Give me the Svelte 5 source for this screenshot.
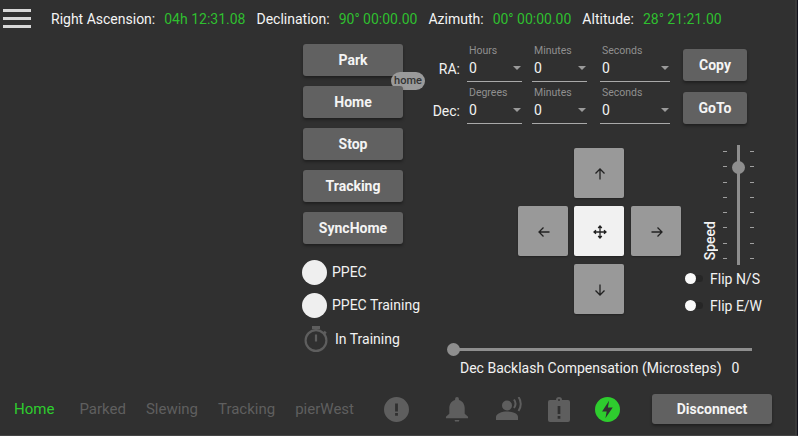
<script>
  const readouts = [
    ['Right Ascension:', '04h 12:31.08'],
    ['Declination:', '90° 00:00.00'],
    ['Azimuth:', '00° 00:00.00'],
    ['Altitude:', '28° 21:21.00']
  ];
  const actions = ['Park', 'Home', 'Stop', 'Tracking', 'SyncHome'];
  const coords = [
    { label: 'RA:', fields: [['Hours', 'w1'], ['Minutes', 'w1'], ['Seconds', 'w2']], action: 'Copy' },
    { label: 'Dec:', fields: [['Degrees', 'w1'], ['Minutes', 'w1'], ['Seconds', 'w2']], action: 'GoTo' }
  ];
  const ticks = [0, 1, 2, 3, 4, 5, 6, 7];
  const statuses = ['Parked', 'Slewing', 'Tracking', 'pierWest'];
</script>

<div class="app">
  <header class="top">
    <button class="burger" aria-label="menu"><span></span><span></span><span></span></button>
    {#each readouts as [k, v]}
      <span class="key">{k}</span><span class="val">{v}</span>
    {/each}
  </header>

  <main class="main">
    <section class="left">
      {#each actions as a}
        <div class="actwrap">
          <button class="btn act">{a}</button>
          {#if a === 'Park'}<span class="tip">home</span>{/if}
        </div>
      {/each}
      <div class="check first"><span class="knob"></span>PPEC</div>
      <div class="check"><span class="knob"></span>PPEC Training</div>
      <div class="timer">
        <svg width="26" height="28" viewBox="0 0 26 28" fill="none" stroke="#5e5e5e" stroke-width="2.200">
          <path d="M9 2.500h8" stroke-width="3"/>
          <circle cx="13" cy="15.500" r="10.400"/>
          <path d="M13 9.500v7"/>
          <path d="M21 6.500l2 2"/>
        </svg>
        <span>In Training</span>
      </div>
    </section>

    <section class="right">
      {#each coords as row}
        <div class="coord">
          <span class="clabel">{row.label}</span>
          {#each row.fields as [name, w]}
            <div class="field {w}">
              <span class="fname">{name}</span>
              <div class="fval"><span>0</span><i class="caret"></i></div>
            </div>
          {/each}
          <button class="btn small">{row.action}</button>
        </div>
      {/each}

      <div class="mid">
        <div class="pad">
          <button class="pb up" aria-label="north">
            <svg viewBox="0 0 14 14"><path d="M7 12.500V2M2.500 6.500 7 2l4.500 4.500"/></svg>
          </button>
          <button class="pb lf" aria-label="west">
            <svg viewBox="0 0 14 14"><path d="M12.500 7H2M6.500 2.500 2 7l4.500 4.500"/></svg>
          </button>
          <button class="pb ct" aria-label="stop">
            <svg viewBox="0 0 14 14"><path d="M7 1v12M1 7h12M5.200 3 7 1l1.800 2M5.200 11 7 13l1.800-2M3 5.200 1 7l2 1.800M11 5.200 13 7l-2 1.800"/></svg>
          </button>
          <button class="pb rt" aria-label="east">
            <svg viewBox="0 0 14 14"><path d="M1.500 7H12M7.500 2.500 12 7l-4.500 4.500"/></svg>
          </button>
          <button class="pb dn" aria-label="south">
            <svg viewBox="0 0 14 14"><path d="M7 1.500V12M2.500 7.500 7 12l4.500-4.500"/></svg>
          </button>
        </div>

        <div class="side">
          <div class="speed">
            <span class="speedlabel">Speed</span>
            <div class="vslider">
              <div class="ticks">{#each ticks as t}<i></i>{/each}</div>
              <div class="vtrack"><span class="vthumb"></span></div>
              <div class="ticks">{#each ticks as t}<i></i>{/each}</div>
            </div>
          </div>
          <div class="flip"><span class="sw"><b></b></span>Flip N/S</div>
          <div class="flip">
            <span class="sw"><b></b></span>Flip E/W
          </div>
        </div>
      </div>

      <div class="hslider"><span class="hthumb"></span></div>
      <div class="backlash"><span>Dec Backlash Compensation (Microsteps)</span><span>0</span></div>
    </section>
  </main>

  <footer class="foot">
    <span class="st home">Home</span>
    {#each statuses as s}<span class="st">{s}</span>{/each}

    <div class="icons">
      <svg class="i alert" width="25" height="25" viewBox="0 0 24 24"><path fill-rule="evenodd" d="M12 0a12 12 0 1 0 0 24 12 12 0 0 0 0-24zm-1.350 6.300h2.700V14h-2.700zm0 9h2.700V18h-2.700z"/></svg>
      <svg class="i bell" width="24" height="25" viewBox="0 0 24 26"><path d="M12 0a2 2 0 0 1 2 2v1c4 1 6 4.500 6 8.500v6l3.500 3v1.500H.5V20.500L4 17.500v-6C4 7.500 6 4 10 3V2a2 2 0 0 1 2-2zM9.500 24h5l-.5 1.500h-4z"/></svg>
      <svg class="i voice" width="28" height="24" viewBox="0 0 28 24"><circle cx="11" cy="8.500" r="5"/><path d="M0 23v-3c0-3.500 6-5.500 11-5.500s11 2 11 5.500v3z"/><path d="M18 2.500c1.800 2.500 1.800 6 0 8.500M22.500 0c3 4 3 10 0 14" fill="none" stroke="#5e5e5e" stroke-width="2"/></svg>
      <svg class="i clip" width="22" height="25" viewBox="0 0 22 25"><path fill-rule="evenodd" d="M2 3h6a3 3 0 0 1 6 0h6a2 2 0 0 1 2 2v18a2 2 0 0 1-2 2H2a2 2 0 0 1-2-2V5a2 2 0 0 1 2-2zm7.650 6v8h2.700V9zm0 10v2.700h2.700V19zM11 2a1 1 0 1 0 0 2 1 1 0 0 0 0-2z"/></svg>
      <svg class="i boltic" width="25" height="25" viewBox="0 0 24 24"><circle cx="12" cy="12" r="12" fill="#2ecc2e"/><path fill="#303030" d="M13.500 3.500 6.800 14h4.400L10 20.500l7-10.500h-4.600z"/></svg>
    </div>
    <button class="btn disc">Disconnect</button>
  </footer>
</div>

<style>
  :global(body) { margin: 0; background: #303030; }
  .app {
    width: 798px; height: 436px; box-sizing: border-box; background: #303030; color: #f2f2f2;
    font-family: Roboto, "Liberation Sans", sans-serif; font-size: 14px; display: flex; flex-direction: column;
    overflow: hidden; border-bottom: 1px solid #444; border-right: 1px solid #11111c; box-shadow: inset -2px 0 0 #393939;
  }
  button { font-family: inherit; border: 0; padding: 0; cursor: pointer; }

  .top { display: flex; align-items: center; height: 38px; font-size: 14px; }
  .burger { width: 28px; height: 19px; background: none; display: flex; flex-direction: column; justify-content: space-between; margin: 0 20px 1px 3px; }
  .burger span { display: block; height: 3px; background: #d8d8d8; }
  .key { color: #f4f4f4; margin-right: 9px; }
  .val { color: #2fbf2f; margin-right: 11px; }

  .main { flex: 1; display: flex; padding-left: 303px; min-height: 0; }
  .left { width: 115px; flex: none; padding-top: 6px; display: flex; flex-direction: column; }
  .actwrap { position: relative; height: 32px; margin-bottom: 10px; }
  .btn {
    background: #616161; color: #f4f4f4; font-weight: 700; border-radius: 3px;
    box-shadow: 0 2px 3px rgba(0,0,0,.35); font-size: 14px;
  }
  .act { width: 100px; height: 32px; display: block; }
  .tip {
    position: absolute; left: 88px; top: 28px; width: 34px; height: 18px; border-radius: 9px;
    background: #9a9a9a; color: #333; font-size: 11px; font-weight: 500; text-align: center; line-height: 18px;
  }
  .check { display: flex; align-items: center; height: 26px; margin-bottom: 7px; font-size: 14px; margin-left: -1px; white-space: nowrap; }
  .check.first { margin-top: 5px; }
  .knob { width: 25px; height: 25px; border-radius: 50%; background: #efefef; margin-right: 5px; flex: none; }
  .timer { display: flex; align-items: center; height: 28px; white-space: nowrap; }
  .timer svg { flex: none; }
  .timer span { margin-left: 6px; }

  .right { flex: 1; position: relative; }
  .coord { display: flex; align-items: flex-end; height: 42px; }
  .coord:first-child { margin-top: 2px; }
  .coord:first-child .small { margin-bottom: 1px; }
  .clabel { width: 42px; text-align: right; margin-right: 7px; font-size: 14px; padding-bottom: 5px; box-sizing: border-box; }
  .field { margin-right: 10px; height: 36px; border-bottom: 1px solid #a9a9a9; display: flex; flex-direction: column; }
  .field:nth-child(3) { margin-right: 13px; }
  .w1 { width: 55px; }
  .w2 { width: 70px; margin-right: 13px; }
  .fname { font-size: 10.500px; color: #8f8f8f; line-height: 12px; padding-left: 2px; }
  .fval { display: flex; justify-content: space-between; align-items: center; padding: 2px 1px 0 2px; font-size: 14px; line-height: 18px; }
  .caret { width: 0; height: 0; border: 4px solid transparent; border-top: 4px solid #9a9a9a; border-bottom: 0; }
  .small { width: 64px; height: 32px; }

  .mid { display: flex; margin-top: 24px; margin-left: 100px; }
  .pad { display: grid; grid-template-columns: 56px 57px 50px; grid-template-rows: 50px 50px 50px; row-gap: 8px; }
  .pb { width: 50px; background: #999; border-radius: 2px; display: flex; align-items: center; justify-content: center; box-shadow: 0 1px 2px rgba(0,0,0,.3); }
  .pb svg { width: 14px; height: 14px; fill: none; stroke: #222; stroke-width: 1.300; margin: 2px 0 0 2px; }
  .up { grid-area: 1 / 2; } .lf { grid-area: 2 / 1; } .ct { grid-area: 2 / 2; background: #f1f1f1; } .rt { grid-area: 2 / 3; } .dn { grid-area: 3 / 2; }

  .side { margin-left: 4px; margin-top: -3px; }
  .speed { display: flex; height: 120px; align-items: flex-end; margin-left: 17px; }
  .speedlabel { writing-mode: vertical-rl; transform: rotate(180deg); font-size: 14px; font-weight: 500; width: 16px; margin-right: 5px; line-height: 16px; padding-top: 5px; }
  .vslider { display: flex; height: 120px; }
  .ticks { display: flex; flex-direction: column; justify-content: space-between; padding: 6px 0; height: 120px; box-sizing: border-box; width: 4px; }
  .ticks i { display: block; width: 4px; height: 1px; background: #a0a0a0; }
  .vtrack { width: 3px; background: #8e8e8e; margin: 0 10px; position: relative; }
  .vthumb { position: absolute; left: -5px; top: 16px; width: 13px; height: 13px; border-radius: 50%; background: #8e8e8e; }
  .flip { display: flex; align-items: center; height: 27px; font-size: 14px; white-space: nowrap; }
  .sw { width: 18px; height: 7px; border-radius: 4px; background: #262626; position: relative; margin-right: 7px; }
  .sw b { position: absolute; left: 0; top: -2px; width: 11px; height: 11px; border-radius: 50%; background: #fafafa; }

  .hslider { position: absolute; left: 35px; top: 310px; width: 299px; height: 3px; background: #8e8e8e; }
  .hthumb { position: absolute; left: -6px; top: -5px; width: 13px; height: 13px; border-radius: 50%; background: #8e8e8e; }
  .backlash { position: absolute; left: 42px; top: 322px; display: flex; gap: 10px; white-space: nowrap; font-size: 14px; }

  .foot { height: 60px; display: flex; align-items: center; padding: 8px 25px 0 14px; box-sizing: border-box; font-size: 15px; }
  .st { color: #5f5f5f; margin-right: 20px; }
  .st.home { color: #2ecc2e; margin-right: 25px; }
  .icons { display: flex; align-items: center; margin-left: 10px; flex: 1; }
  .i { fill: #5e5e5e; flex: none; }
  .bell { margin-left: 36px; }
  .voice { margin-left: 27px; }
  .clip { margin-left: 24px; }
  .boltic { margin-left: 25px; }
  .disc { width: 120px; height: 30px; flex: none; }
</style>
